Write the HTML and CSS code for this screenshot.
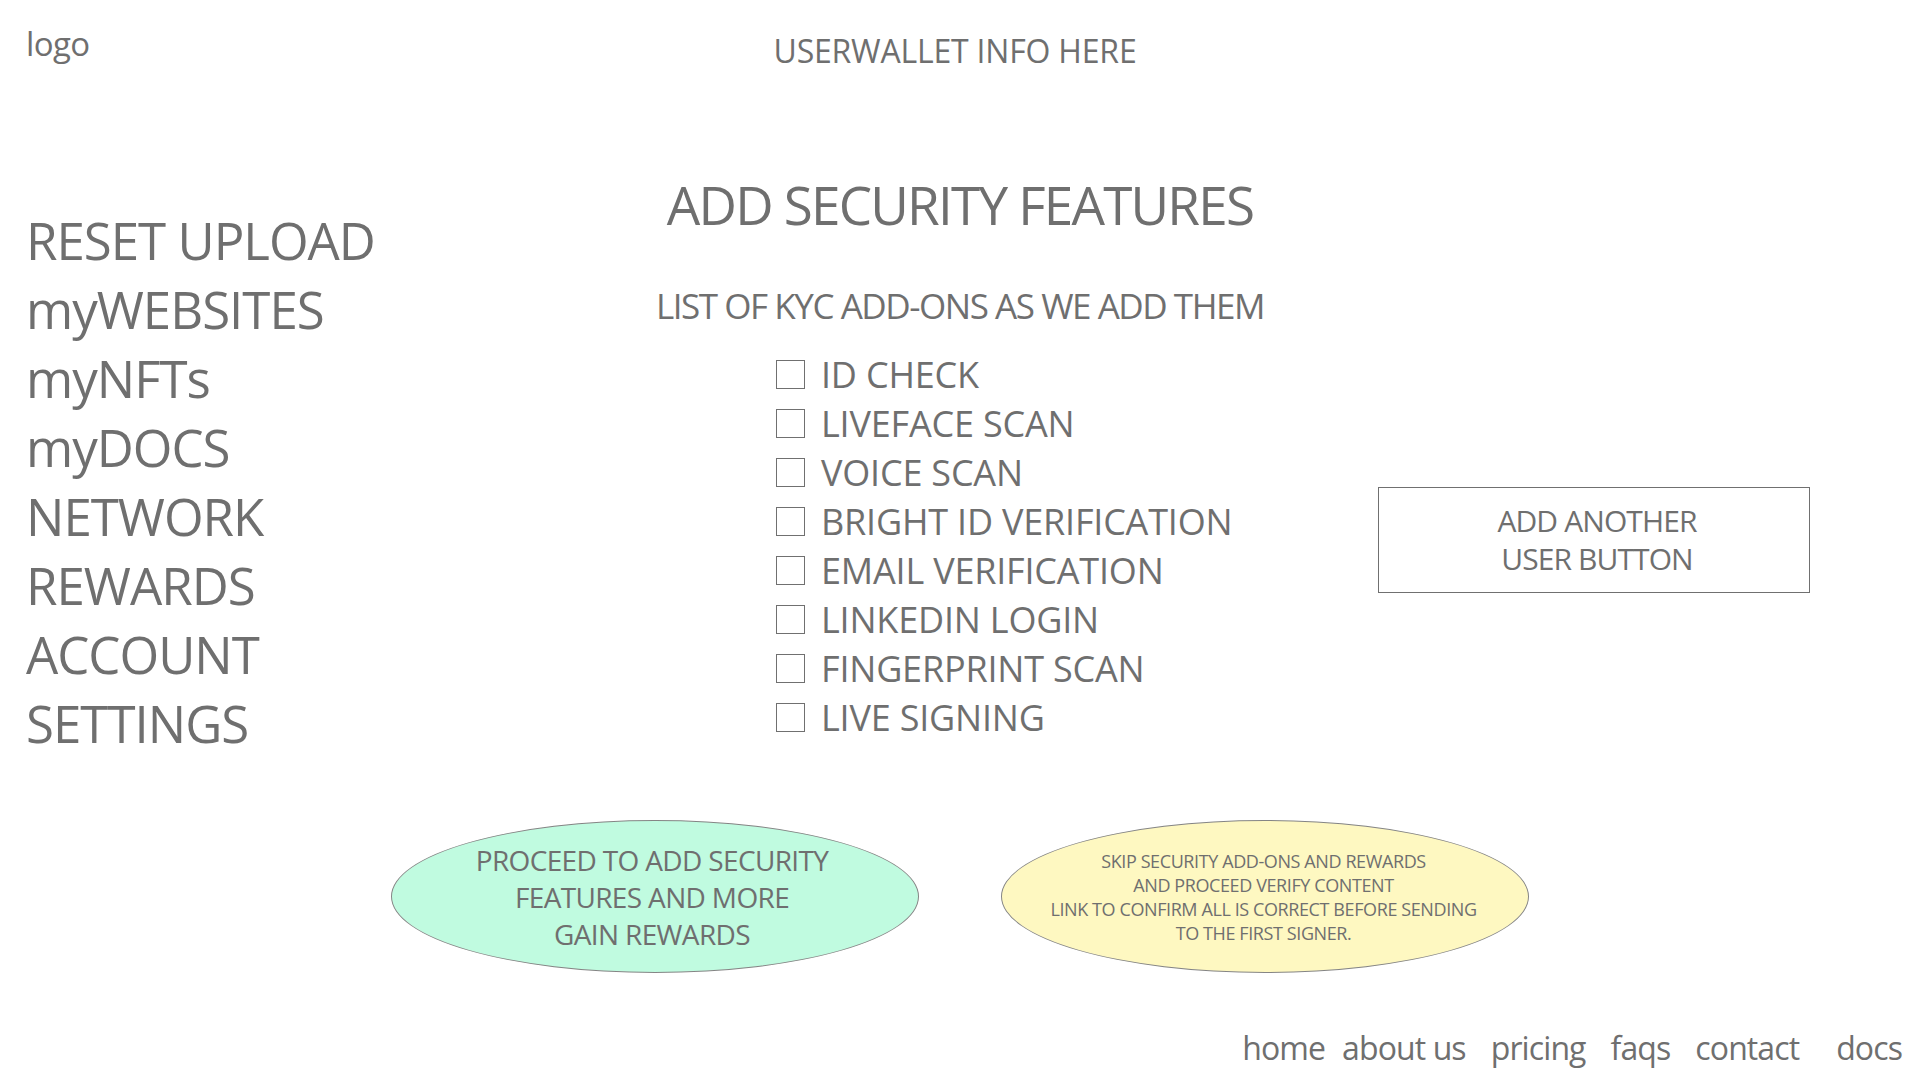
FILE: index.html
```html
<!DOCTYPE html>
<html lang="en">
<head>
<meta charset="utf-8">
<title>Add Security Features</title>
<link rel="stylesheet" href="styles.css">
</head>
<body>
<div class="page">
  <header class="top">
    <div class="logo">logo</div>
    <div class="wallet">USERWALLET INFO HERE</div>
    <div class="top-spacer"></div>
  </header>
  <main class="main">
    <nav class="side">
      <div class="side-item">RESET UPLOAD</div>
      <div class="side-item">myWEBSITES</div>
      <div class="side-item">myNFTs</div>
      <div class="side-item">myDOCS</div>
      <div class="side-item">NETWORK</div>
      <div class="side-item">REWARDS</div>
      <div class="side-item">ACCOUNT</div>
      <div class="side-item">SETTINGS</div>
    </nav>
    <section class="center">
      <h1 class="title">ADD SECURITY FEATURES</h1>
      <p class="sub">LIST OF KYC ADD-ONS AS WE ADD THEM</p>
      <ul class="checks">
        <li class="check"><span class="box"></span><span class="label">ID CHECK</span></li>
        <li class="check"><span class="box"></span><span class="label">LIVEFACE SCAN</span></li>
        <li class="check"><span class="box"></span><span class="label">VOICE SCAN</span></li>
        <li class="check"><span class="box"></span><span class="label">BRIGHT ID VERIFICATION</span></li>
        <li class="check"><span class="box"></span><span class="label">EMAIL VERIFICATION</span></li>
        <li class="check"><span class="box"></span><span class="label">LINKEDIN LOGIN</span></li>
        <li class="check"><span class="box"></span><span class="label">FINGERPRINT SCAN</span></li>
        <li class="check"><span class="box"></span><span class="label">LIVE SIGNING</span></li>
      </ul>
    </section>
    <aside class="right">
      <div class="add-user">ADD ANOTHER<br>USER BUTTON</div>
    </aside>
  </main>
  <div class="actions">
    <div class="oval green">PROCEED TO ADD SECURITY<br>FEATURES AND MORE<br>GAIN REWARDS</div>
    <div class="oval yellow">SKIP SECURITY ADD-ONS AND REWARDS<br>AND PROCEED VERIFY CONTENT<br>LINK TO CONFIRM ALL IS CORRECT BEFORE SENDING<br>TO THE FIRST SIGNER.</div>
  </div>
  <footer class="foot">
    <span class="foot-link">home</span>
    <span class="foot-link foot-near">about us</span>
    <span class="foot-link">pricing</span>
    <span class="foot-link">faqs</span>
    <span class="foot-link">contact</span>
    <span class="foot-link foot-far">docs</span>
  </footer>
</div>
</body>
</html>
```
FILE: styles.css
```css
* { box-sizing: border-box; }
html, body { margin: 0; padding: 0; background: #ffffff; }
body {
  font-family: "Open Sans", "Noto Sans", "Liberation Sans", sans-serif;
  color: #6f6f6f;
}
.page {
  width: 1920px;
  height: 1080px;
  display: flex;
  flex-direction: column;
  overflow: hidden;
}
.top {
  height: 170px;
  display: grid;
  grid-template-columns: 1fr auto 1fr;
  align-items: start;
}
.logo {
  font-size: 33px;
  line-height: 1;
  padding: 27px 0 0 26px;
  letter-spacing: -0.6px;
}
.wallet {
  font-size: 32px;
  line-height: 1;
  padding-top: 35px;
  letter-spacing: -0.2px;
  margin-left: -10px;
}
.main {
  height: 650px;
  display: grid;
  grid-template-columns: 640px 640px 640px;
}
.side {
  padding: 36px 0 0 26px;
  display: flex;
  flex-direction: column;
}
.side-item {
  font-size: 51px;
  line-height: 69px;
  letter-spacing: -1px;
  white-space: nowrap;
}
.center {
  display: flex;
  flex-direction: column;
  align-items: center;
  padding-top: 8px;
}
.title {
  margin: 0;
  font-weight: 400;
  font-size: 53px;
  line-height: 1;
  letter-spacing: -1.8px;
  white-space: nowrap;
}
.sub {
  margin: 57px 0 0;
  font-size: 35px;
  line-height: 1;
  letter-spacing: -1.45px;
  white-space: nowrap;
}
.checks {
  list-style: none;
  margin: 27px 0 0;
  padding: 0 0 0 136px;
  align-self: stretch;
}
.check {
  height: 49px;
  display: flex;
  align-items: center;
}
.box {
  width: 29px;
  height: 29px;
  border: 1.5px solid #707070;
  flex: none;
}
.label {
  margin-left: 16px;
  font-size: 36px;
  line-height: 1;
  letter-spacing: -0.2px;
  white-space: nowrap;
}
.right {
  padding: 317px 0 0 98px;
}
.add-user {
  width: 432px;
  height: 106px;
  border: 1.5px solid #707070;
  display: flex;
  align-items: center;
  justify-content: center;
  text-align: center;
  font-size: 30px;
  line-height: 38px;
  letter-spacing: -0.9px;
  padding: 0 0 1px 6px;
}
.actions {
  display: flex;
  gap: 82px;
  padding-left: 391px;
}
.oval {
  width: 528px;
  height: 153px;
  border-radius: 50%;
  border: 1px solid #858585;
  display: flex;
  align-items: center;
  justify-content: center;
  text-align: center;
}
.green {
  background: #c0fbe0;
  font-size: 28px;
  line-height: 37px;
  letter-spacing: -0.65px;
  padding: 2px 6px 0 0;
}
.yellow {
  background: #fef8c1;
  font-size: 18px;
  line-height: 24px;
  letter-spacing: -0.4px;
  padding-right: 3px;
}
.foot {
  margin-top: 59px;
  display: flex;
  justify-content: flex-end;
  gap: 25px;
  padding-right: 18px;
}
.foot-link {
  font-size: 32px;
  line-height: 1;
  letter-spacing: -0.9px;
}
.foot-near { margin-left: -8px; }
.foot-far { margin-left: 12px; }
```
